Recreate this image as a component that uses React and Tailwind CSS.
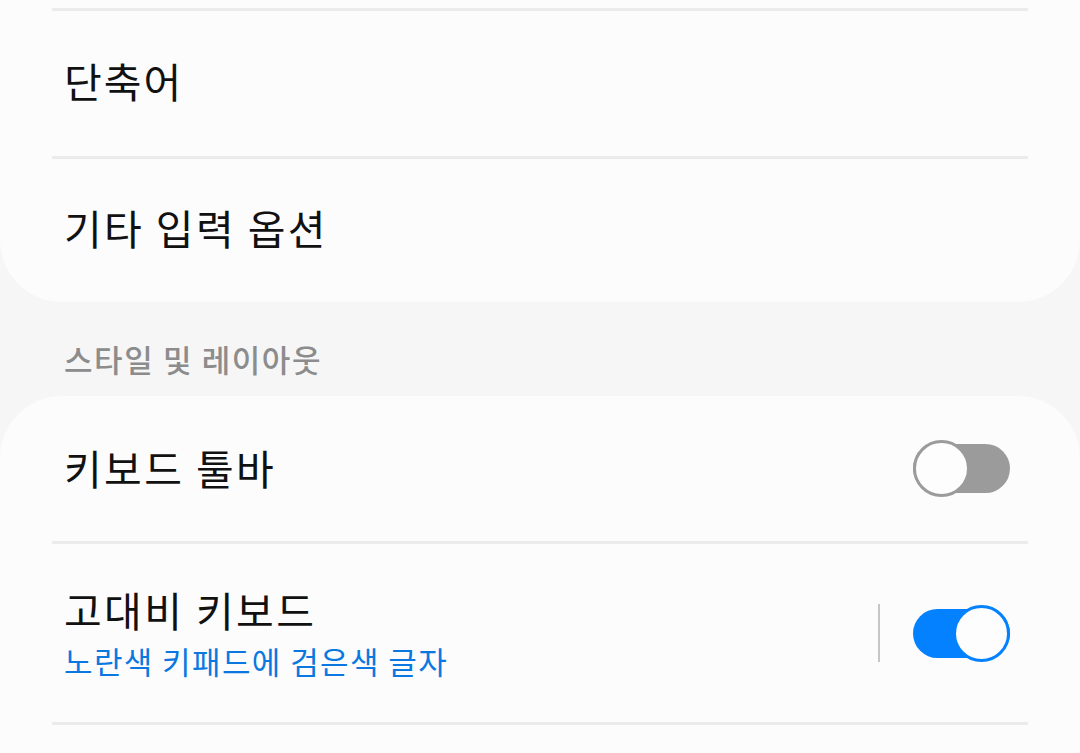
export default function App() {
  const font = { fontFamily: '"Noto Sans CJK KR", "Noto Sans", sans-serif' };
  const Divider = () => <div className="mx-[52px] h-[3px] bg-[#ebebeb]" />;
  return (
    <div className="w-[1080px] h-[753px] overflow-hidden bg-[#f6f6f6]" style={font}>
      <div className="bg-[#fcfcfc] rounded-b-[62px]">
        <div className="h-[8px]" />
        <Divider />
        <div className="h-[145px] flex items-center px-[64px]">
          <span className="mb-[7px] text-[41px] leading-[48px] tracking-[2px] text-[#111]">단축어</span>
        </div>
        <Divider />
        <div className="h-[143px] flex items-center px-[64px]">
          <span className="mb-[7px] text-[41px] leading-[48px] tracking-[2.4px] text-[#111]">기타 입력 옵션</span>
        </div>
      </div>
      <div className="h-[94px] pt-[37px] px-[64px]">
        <span className="text-[31px] leading-[40px] tracking-[1.6px] font-medium text-[#8c8c8c]">스타일 및 레이아웃</span>
      </div>
      <div className="bg-[#fcfcfc] rounded-t-[62px] h-[400px]">
        <div className="h-[145px] flex items-center justify-between pl-[64px] pr-[70px]">
          <span className="mb-[4px] text-[41px] leading-[48px] tracking-[2.4px] text-[#111]">키보드 툴바</span>
          <div className="relative w-[97px] h-[57px] flex items-center">
            <div className="absolute left-0 right-0 top-[4px] h-[49px] rounded-full bg-[#9b9b9b]" />
            <div className="absolute left-0 top-0 w-[57px] h-[57px] rounded-full bg-[#fdfdfd] border-[3px] border-[#9b9b9b]" />
          </div>
        </div>
        <Divider />
        <div className="h-[178px] flex items-center justify-between pl-[64px] pr-[70px]">
          <div className="flex flex-col">
            <span className="text-[41px] leading-[50px] tracking-[2.4px] text-[#111]">고대비 키보드</span>
            <span className="text-[31px] leading-[42px] tracking-[1.4px] text-[#0a78e0] mt-[6px]">노란색 키패드에 검은색 글자</span>
          </div>
          <div className="flex items-center">
            <div className="w-[2px] h-[58px] bg-[#c6c6c6] mr-[33px]" />
            <div className="relative w-[97px] h-[57px]">
              <div className="absolute left-0 right-0 top-[4px] h-[49px] rounded-full bg-[#0381fe]" />
              <div className="absolute right-0 top-0 w-[57px] h-[57px] rounded-full bg-[#fdfdfd] border-[3px] border-[#0381fe]" />
            </div>
          </div>
        </div>
        <Divider />
      </div>
    </div>
  );
}
